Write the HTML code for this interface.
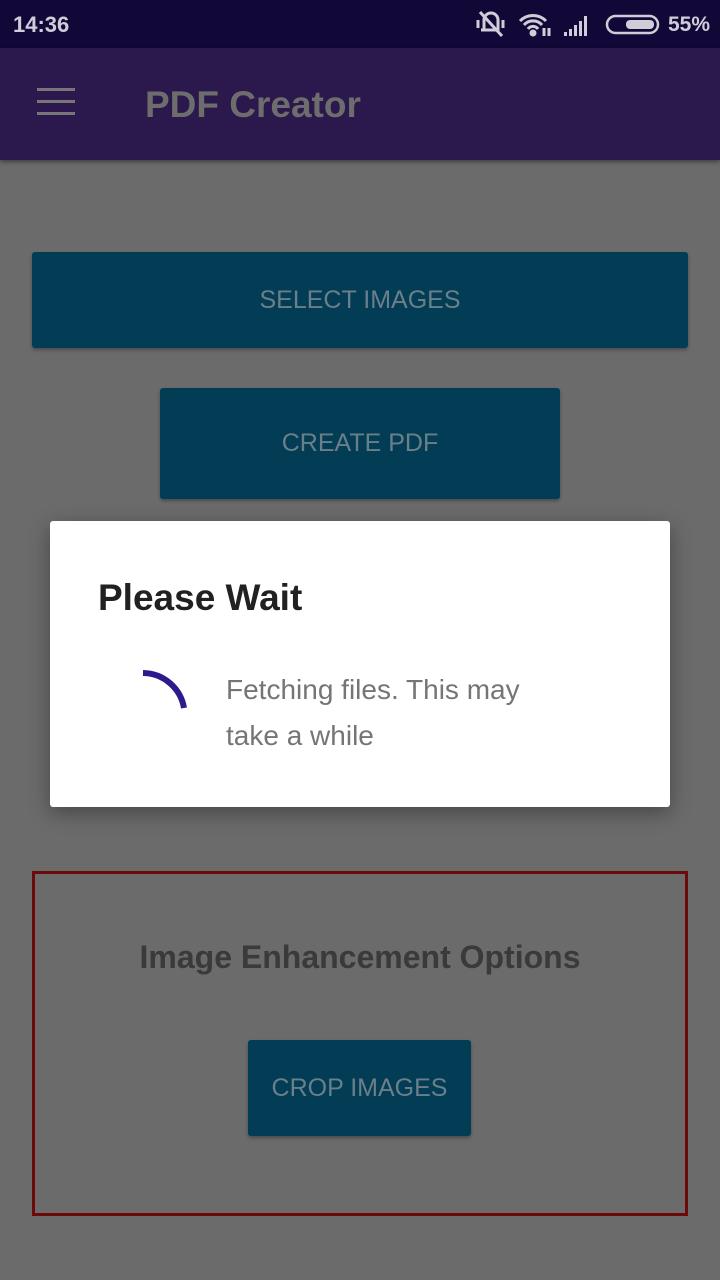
<!DOCTYPE html>
<html><head><meta charset="utf-8"><style>
*{margin:0;padding:0;box-sizing:border-box}
body{width:720px;height:1280px;background:#6b6b6b;font-family:"Liberation Sans",sans-serif;position:relative;overflow:hidden}
.sb{position:absolute;top:0;left:0;width:720px;height:48px;background:#120838;color:#d0cdd8;font-size:22px;font-weight:bold}
.ab{position:absolute;top:48px;left:0;width:720px;height:112px;background:#2b184d;box-shadow:0 2px 4px rgba(0,0,0,.4)}
.btn{position:absolute;background:#023d55;color:#6a7f89;font-size:25px;display:flex;align-items:center;justify-content:center;border-radius:3px;box-shadow:0 2px 3px rgba(0,0,0,.3)}
.dlg{position:absolute;left:50px;top:521px;width:620px;height:286px;background:#fff;border-radius:3px;box-shadow:0 6px 20px rgba(0,0,0,.35)}
</style></head><body>
<div class="sb"><span style="position:absolute;left:13px;top:12px">14:36</span>
<svg style="position:absolute;left:476px;top:10px" width="200" height="30" viewBox="0 0 200 30" fill="none" stroke="#d0cdd8" stroke-width="3">
<path d="M8 20 V10 a7 7 0 0 1 14 0 V20 H5 M2 10v8 M27 10v8 M4 2 L26 26" />
<path d="M44 11 a18 18 0 0 1 26 0 M48 15 a12 12 0 0 1 18 0 M52 19 a6 6 0 0 1 10 0"/><circle cx="57" cy="23" r="2" fill="#d0cdd8"/>
<path d="M68 18v8 M73 18v8"/>
<g fill="#d0cdd8" stroke="none"><rect x="88" y="22" width="3" height="4"/><rect x="93" y="19" width="3" height="7"/><rect x="98" y="15" width="3" height="11"/><rect x="103" y="11" width="3" height="15"/><rect x="108" y="6" width="3" height="20"/></g>
<rect x="131" y="6" width="51" height="17" rx="8.5" stroke-width="2.5"/><rect x="150" y="10" width="28" height="9" rx="4" fill="#d0cdd8" stroke="none"/>
</svg>
<span style="position:absolute;left:668px;top:13px;font-size:21px">55%</span></div>
<div class="ab">
<div style="position:absolute;left:37px;top:40px;width:38px;height:3px;background:#777;box-shadow:0 12px 0 #777,0 24px 0 #777"></div>
<div style="position:absolute;left:145px;top:36px;font-size:37px;color:#6d6d6d;font-weight:bold">PDF Creator</div></div>
<div class="btn" style="left:32px;top:252px;width:656px;height:96px">SELECT IMAGES</div>
<div class="btn" style="left:160px;top:388px;width:400px;height:111px">CREATE PDF</div>
<div style="position:absolute;left:32px;top:871px;width:656px;height:345px;border:3px solid #6a0a0a"></div>
<div style="position:absolute;left:0;width:720px;top:939px;text-align:center;font-size:32px;font-weight:bold;color:#3a3a3a">Image Enhancement Options</div>
<div class="btn" style="left:248px;top:1040px;width:223px;height:96px">CROP IMAGES</div>
<div class="dlg">
<div style="position:absolute;left:48px;top:56px;font-size:37px;color:#212121;font-weight:bold">Please Wait</div>
<svg style="position:absolute;left:80px;top:140px" width="70" height="70"><path d="M13 12 A42 42 0 0 1 54 47" fill="none" stroke="#2e1a8c" stroke-width="6"/></svg>
<div style="position:absolute;left:176px;top:146px;font-size:28px;line-height:46px;color:#757575;width:345px">Fetching files. This may take a while</div>
</div>
</body></html>
